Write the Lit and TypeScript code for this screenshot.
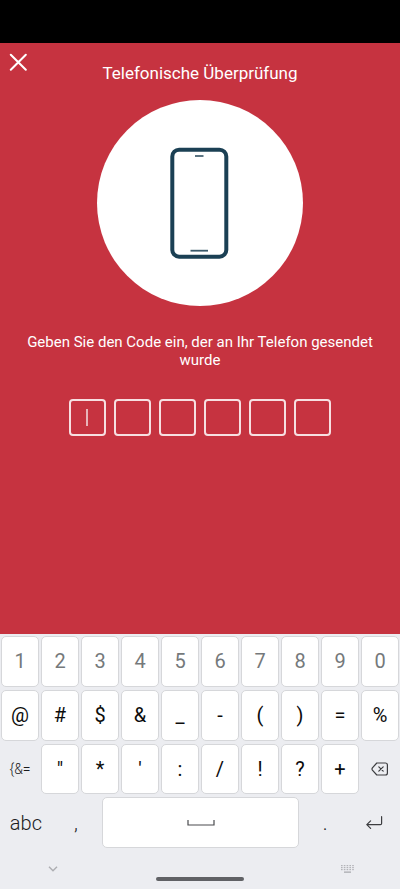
import { LitElement, html, css, svg } from "lit";
import { customElement, property } from "lit/decorators.js";
import { classMap } from "lit/directives/class-map.js";

const DIGITS = ["1", "2", "3", "4", "5", "6", "7", "8", "9", "0"];
const SYMBOLS = ["@", "#", "$", "&", "_", "-", "(", ")", "=", "%"];
const MORE_SYMBOLS = ['"', "*", "'", ":", "/", "!", "?", "+"];

@customElement("code-entry")
class CodeEntry extends LitElement {
  @property({ type: Number }) length = 6;
  @property({ type: Number }) active = 0;

  static styles = css`
    :host {
      display: flex;
      justify-content: center;
      gap: 8px;
    }
    .cell {
      position: relative;
      width: 37px;
      height: 37px;
    }
    .digit {
      box-sizing: border-box;
      width: 100%;
      height: 100%;
      margin: 0;
      padding: 0;
      border: 2px solid #f7dfe1;
      border-radius: 4px;
      background: transparent;
      color: #fff;
      font: 18px Roboto, sans-serif;
      text-align: center;
      outline: none;
    }
    .caret {
      position: absolute;
      inset: 10px 17px;
      width: 2px;
      background: #e8b4b9;
    }
  `;

  render() {
    return Array.from(
      { length: this.length },
      (_, i) => html`
        <label class="cell">
          <input class="digit" type="text" inputmode="numeric" maxlength="1" aria-label="Ziffer ${i + 1}" />
          ${i === this.active ? html`<span class="caret"></span>` : ""}
        </label>
      `
    );
  }
}

@customElement("soft-keyboard")
class SoftKeyboard extends LitElement {
  static styles = css`
    :host {
      display: block;
      padding-top: 2px;
      background: #ecedf1;
      font-family: Roboto, sans-serif;
    }
    .rows {
      display: grid;
      grid-template-rows: repeat(4, 1fr);
      row-gap: 3px;
      height: 212px;
    }
    .row {
      display: grid;
      grid-template-columns: repeat(10, 1fr);
    }
    .row.last {
      grid-template-columns: 1fr 1fr 4fr 1fr 1fr;
      padding: 0 0 0 1px;
    }
    .key {
      display: flex;
      align-items: center;
      justify-content: center;
      box-sizing: border-box;
      min-width: 0;
      margin: 0 1px;
      padding: 0;
      border: 1px solid #d6d7da;
      border-radius: 5px;
      background: #fff;
      color: #0c0c0c;
      font: 400 20px/24px Roboto, sans-serif;
    }
    .key.number {
      color: #75797b;
    }
    .key.flat {
      border-color: transparent;
      background: transparent;
      color: #1a1b1d;
      font-weight: 300;
    }
    .key.small {
      font-size: 14px;
    }
    .nav {
      display: grid;
      grid-template-columns: 1fr 90px 1fr;
      align-items: center;
      height: 41px;
    }
    .side {
      display: flex;
      margin: 0;
      padding: 0;
      border: 0;
      background: none;
    }
    .hide {
      padding-left: 48px;
    }
    .switch {
      padding-right: 46px;
      justify-content: flex-end;
    }
    .pill {
      height: 4px;
      margin: 20px 1px 0;
      border-radius: 2px;
      background: #606165;
    }
    svg {
      display: block;
      fill: none;
    }
  `;

  private key(label: string, kind = "") {
    return html`<button
      type="button"
      class=${classMap({
        key: true,
        number: kind === "number",
        flat: kind === "flat" || kind === "small",
        small: kind === "small",
      })}
    >${label}</button>`;
  }

  render() {
    const dots = [0, 1, 2].flatMap((r) =>
      [0, 1, 2, 3, 4].map((c) => svg`<rect x=${c * 2.8} y=${r * 2} width="1.6" height="1.2" />`)
    );
    return html`
      <div class="rows">
        <div class="row">${DIGITS.map((d) => this.key(d, "number"))}</div>
        <div class="row">${SYMBOLS.map((s) => this.key(s))}</div>
        <div class="row">
          ${this.key("{&=", "small")} ${MORE_SYMBOLS.map((s) => this.key(s))}
          <button type="button" class="key flat" aria-label="Löschen">
            <svg width="18" height="14" viewBox="0 0 18 14" stroke="#3c3d40" stroke-width="1.2" stroke-linejoin="round" stroke-linecap="round">
              <path d="M5.8 1H14.4Q16.4 1 16.4 3V11Q16.4 13 14.4 13H5.8L1.4 8.2Q.6 7 1.4 5.8Z" />
              <path d="M7.8 4.8L12.2 9.2M12.2 4.8L7.8 9.2" />
            </svg>
          </button>
        </div>
        <div class="row last">
          ${this.key("abc", "flat")} ${this.key(",", "flat")}
          <button type="button" class="key" aria-label="Leerzeichen">
            <svg width="28" height="6" viewBox="0 0 28 6" stroke="#4a4b4e" stroke-width="1.2">
              <path d="M1 0V5H27V0" />
            </svg>
          </button>
          ${this.key(".", "flat")}
          <button type="button" class="key flat" aria-label="Eingabe">
            <svg width="18" height="14" viewBox="0 0 18 14" stroke="#3c3d40" stroke-width="1.2" stroke-linecap="round" stroke-linejoin="round">
              <path d="M15.6 .7V7.4Q15.6 8.6 14.4 8.6H.8M4.6 4.8L.8 8.6L4.6 12.4" />
            </svg>
          </button>
        </div>
      </div>
      <div class="nav">
        <button type="button" class="side hide" aria-label="Tastatur ausblenden">
          <svg width="10" height="6" viewBox="0 0 10 6" stroke="#adaeb2" stroke-width="1.4">
            <path d="M1 .8L5 4.8L9 .8" />
          </svg>
        </button>
        <div class="pill"></div>
        <button type="button" class="side switch" aria-label="Tastatur wechseln">
          <svg width="13" height="8" viewBox="0 0 13 8">
            <g fill="#b3b4b8">${dots}<rect x="3" y="6.4" width="7" height="1.5" /></g>
          </svg>
        </button>
      </div>
    `;
  }
}

@customElement("app-root")
class AppRoot extends LitElement {
  static styles = css`
    :host {
      display: flex;
      flex-direction: column;
      min-height: 100vh;
      background: #c63340;
      color: #fff;
      font-family: Roboto, sans-serif;
    }
    .status {
      height: 43px;
      background: #000;
    }
    main {
      flex: 1;
      display: flex;
      flex-direction: column;
    }
    .header {
      display: grid;
      grid-template-columns: 36px 1fr 36px;
      height: 57px;
    }
    .close {
      display: flex;
      margin: 0;
      padding: 10px 0 0 9px;
      border: 0;
      background: none;
    }
    .title {
      margin: 20px 0 0;
      font-size: 17px;
      line-height: 20px;
      font-weight: 400;
      text-align: center;
    }
    .disc {
      display: flex;
      align-items: center;
      justify-content: center;
      align-self: center;
      width: 206px;
      height: 206px;
      border-radius: 50%;
      background: #fff;
    }
    .hint {
      margin: 27px 20px 30px;
      font-size: 15px;
      line-height: 18px;
      text-align: center;
    }
  `;

  render() {
    return html`
      <div class="status"></div>
      <main>
        <div class="header">
          <button type="button" class="close" aria-label="Schließen">
            <svg width="18" height="18" viewBox="0 0 18 18" stroke="#fff" stroke-width="2" stroke-linecap="round">
              <path d="M1.8 1.8L16.8 16.8M16.8 1.8L1.8 16.8" />
            </svg>
          </button>
          <h1 class="title">Telefonische Überprüfung</h1>
        </div>
        <div class="disc">
          <svg width="60" height="112" viewBox="0 0 60 112" fill="none" stroke="#1b4054">
            <rect x="2.3" y="2.7" width="54" height="107" rx="6.8" stroke-width="4" />
            <path d="M25 9H33.5" stroke-width="1.8" stroke="#4a6675" />
            <path d="M20.5 103.7H38" stroke-width="1.8" stroke="#3a596a" />
          </svg>
        </div>
        <p class="hint">Geben Sie den Code ein, der an Ihr Telefon gesendet wurde</p>
        <code-entry length="6" active="0"></code-entry>
      </main>
      <soft-keyboard></soft-keyboard>
    `;
  }
}
